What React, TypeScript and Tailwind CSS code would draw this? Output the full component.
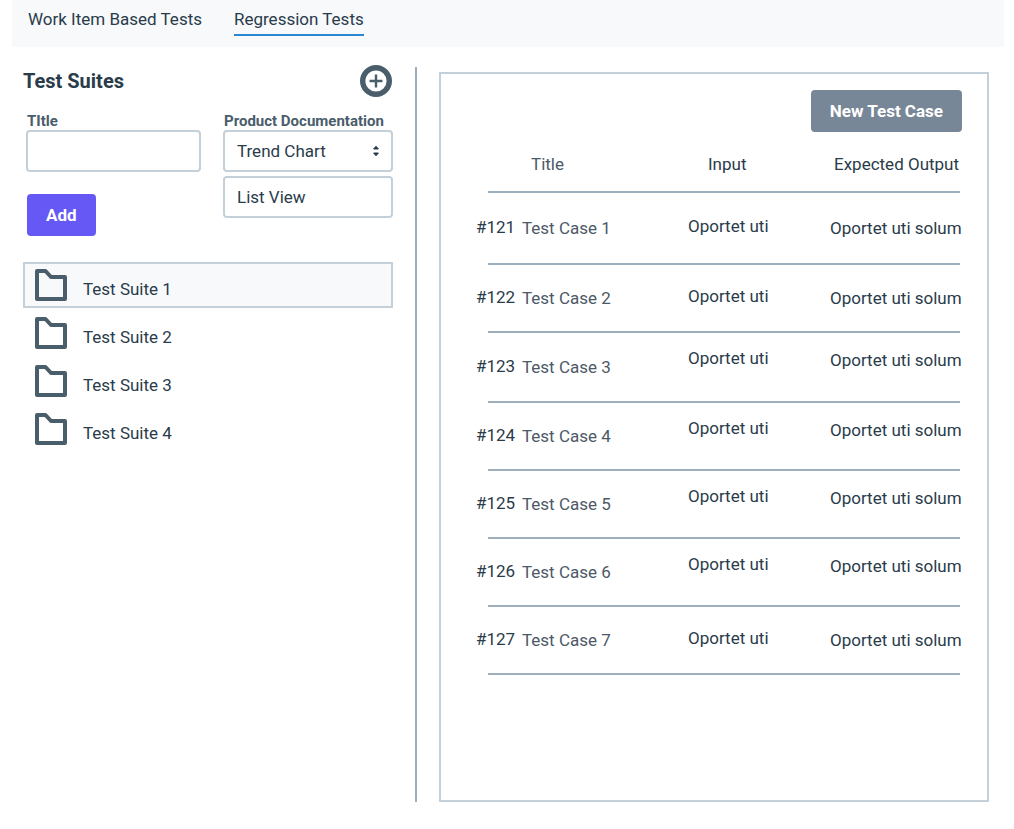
import { useState } from "react";
import { clsx } from "clsx";

const suites = ["Test Suite 1", "Test Suite 2", "Test Suite 3", "Test Suite 4"];

type TestCase = {
  id: number;
  title: string;
  height: string;
  align: string;
};

const cases: TestCase[] = [
  { id: 121, title: "Test Case 1", height: "h-[72px]", align: "align-middle" },
  { id: 122, title: "Test Case 2", height: "h-[68px]", align: "align-middle" },
  { id: 123, title: "Test Case 3", height: "h-[70px]", align: "align-top" },
  { id: 124, title: "Test Case 4", height: "h-[68px]", align: "align-top" },
  { id: 125, title: "Test Case 5", height: "h-[68px]", align: "align-top" },
  { id: 126, title: "Test Case 6", height: "h-[68px]", align: "align-top" },
  { id: 127, title: "Test Case 7", height: "h-[68px]", align: "align-middle" },
];

function FolderIcon() {
  return (
    <svg
      viewBox="0 0 32 32"
      className="size-8 shrink-0"
      fill="none"
      stroke="#4a5d6b"
      strokeWidth="4"
      strokeLinejoin="round"
      aria-hidden="true"
    >
      <path d="M2 2H10.5L16 8H30V30H2Z" />
    </svg>
  );
}

function AddIcon() {
  return (
    <svg viewBox="0 0 32 32" className="size-8" fill="none" stroke="#4a5d6b" aria-hidden="true">
      <circle cx="16" cy="16" r="13.3" strokeWidth="5.4" />
      <path d="M9.5 16H22.5M16 9.5V22.5" strokeWidth="2.4" />
    </svg>
  );
}

function Tabs() {
  return (
    <nav className="mr-2.5 ml-3 flex h-[47px] gap-8 bg-[#f7f9fb] px-4">
      <a href="#work-items" className="h-9 pt-2">
        Work Item Based Tests
      </a>
      <a
        href="#regression"
        aria-current="page"
        className="h-9 border-b-2 border-[#2b88d0] pt-2"
      >
        Regression Tests
      </a>
    </nav>
  );
}

function SuiteForm() {
  const [view, setView] = useState("Trend Chart");
  return (
    <form className="mt-3.5 flex gap-[22px] pl-[3px]" onSubmit={(e) => e.preventDefault()}>
      <div className="flex min-w-0 flex-1 flex-col items-start">
        <label htmlFor="title" className="pl-px text-[15px] leading-5 font-bold text-[#4a5d6b]">
          TItle
        </label>
        <input
          id="title"
          className="-mt-px h-[42px] w-full rounded border-2 border-[#c3cfd9] bg-white px-3"
        />
        <button
          type="submit"
          className="mt-[22px] ml-px h-[42px] rounded bg-[#6558f5] px-[19px] font-bold text-white"
        >
          Add
        </button>
      </div>
      <div className="flex w-[170px] flex-col">
        <label
          htmlFor="documentation"
          className="pl-px text-[15px] leading-5 font-bold whitespace-nowrap text-[#4a5d6b]"
        >
          Product Documentation
        </label>
        <div className="relative -mt-px">
          <select
            id="documentation"
            value={view}
            onChange={(e) => setView(e.target.value)}
            className="h-[42px] w-full appearance-none rounded border-2 border-[#c3cfd9] bg-white px-3"
          >
            <option>Trend Chart</option>
            <option>List View</option>
          </select>
          <svg
            viewBox="0 0 8 12"
            className="pointer-events-none absolute top-[15px] right-[13px] h-3 w-2"
            fill="#2a3b4a"
            stroke="#2a3b4a"
            strokeLinejoin="round"
            aria-hidden="true"
          >
            <path d="M4 1.2L6.4 4H1.6ZM4 10.8L1.6 8H6.4Z" />
          </svg>
        </div>
        <button
          type="button"
          onClick={() => setView("List View")}
          className="mt-1 h-[42px] rounded border-2 border-[#c3cfd9] bg-white px-3 text-left"
        >
          List View
        </button>
      </div>
    </form>
  );
}

function Sidebar() {
  const [selected, setSelected] = useState(suites[0]);
  return (
    <aside className="w-[370px] shrink-0">
      <header className="flex items-center justify-between pr-px">
        <h1 className="text-xl font-bold">Test Suites</h1>
        <button type="button" aria-label="Add test suite">
          <AddIcon />
        </button>
      </header>
      <SuiteForm />
      <ul className="mt-[26px] flex flex-col gap-0.5">
        {suites.map((name) => (
          <li key={name}>
            <button
              type="button"
              onClick={() => setSelected(name)}
              className={clsx(
                "flex h-[46px] w-full items-center gap-4 border-2 px-2.5",
                name === selected ? "border-[#c3cfd9] bg-[#f7f9fb]" : "border-transparent",
              )}
            >
              <FolderIcon />
              <span className="pt-2">{name}</span>
            </button>
          </li>
        ))}
      </ul>
    </aside>
  );
}

function CaseTable() {
  return (
    <table className="mt-2 w-full table-fixed border-collapse text-left whitespace-nowrap">
      <colgroup>
        <col className="w-[34px]" />
        <col />
        <col className="w-[142px]" />
        <col className="w-[130px]" />
      </colgroup>
      <thead>
        <tr className="h-[52px] border-b-2 border-[#9dafbd]">
          <td />
          <th className="pb-1 pl-[9px] font-normal text-[#4c5967]">Title</th>
          <th className="pb-1 pl-5 font-normal">Input</th>
          <th className="pb-1 pl-1 font-normal">Expected Output</th>
        </tr>
      </thead>
      <tbody>
        {cases.map((item) => (
          <tr key={item.id} className={clsx("border-b-2 border-[#9dafbd]", item.height)}>
            <td className="pb-0.5">
              <span className="-ml-3">#{item.id}</span>
            </td>
            <td className="text-[#4c5967]">{item.title}</td>
            <td className={clsx(item.align, item.align === "align-middle" ? "pb-1" : "pt-3.5")}>
              Oportet uti
            </td>
            <td className={clsx(item.align, item.align === "align-middle" ? "pb-0" : "pt-4")}>
              Oportet uti solum
            </td>
          </tr>
        ))}
      </tbody>
    </table>
  );
}

export default function App() {
  return (
    <div className="min-h-screen bg-white font-['Roboto',sans-serif] text-[17px] leading-[22px] text-[#2a3b4a]">
      <Tabs />
      <main className="flex pt-[18px] pr-[25px] pb-[26px] pl-[23px]">
        <Sidebar />
        <div className="mt-0.5 ml-[22px] w-0.5 shrink-0 self-stretch bg-[#9dafbd]" />
        <section className="mt-[7px] ml-[22px] min-h-[730px] min-w-0 flex-1 border-2 border-[#c3cfd9] pt-4 pr-[27px] pl-[47px]">
          <div className="-mr-0.5 flex justify-end">
            <button
              type="button"
              className="h-[42px] rounded bg-[#778797] px-[19px] font-bold text-white"
            >
              New Test Case
            </button>
          </div>
          <CaseTable />
        </section>
      </main>
    </div>
  );
}
